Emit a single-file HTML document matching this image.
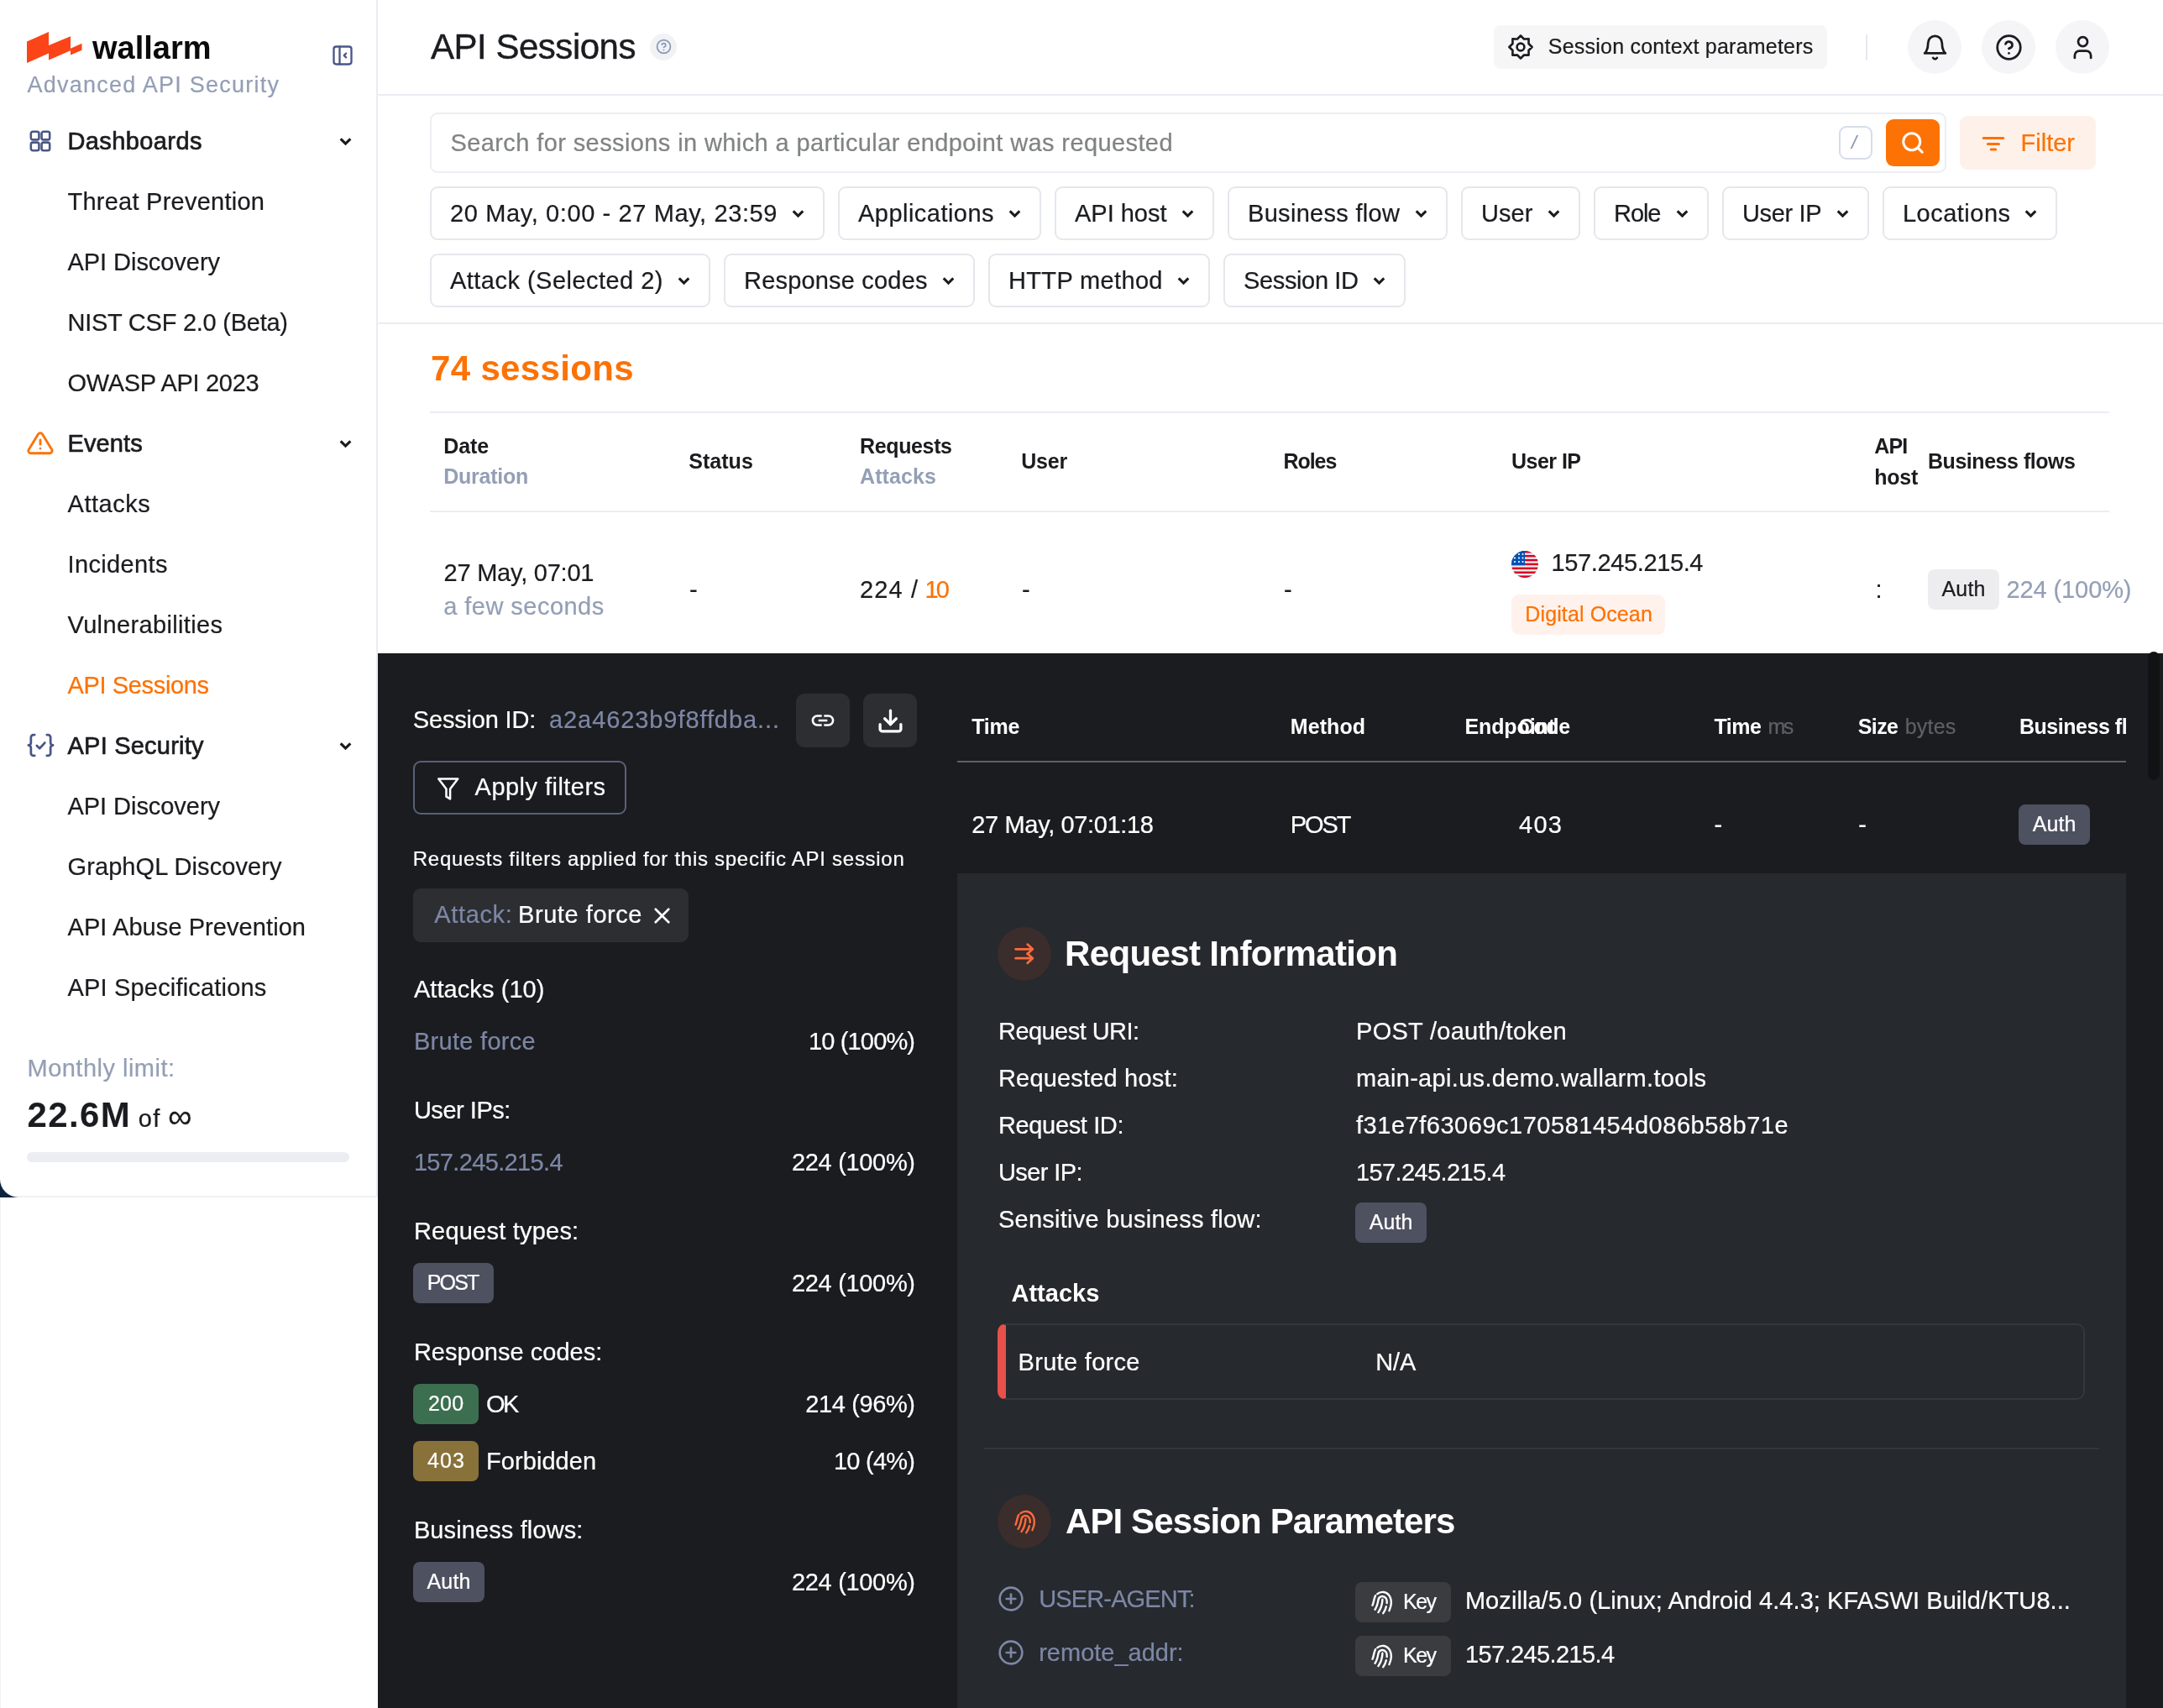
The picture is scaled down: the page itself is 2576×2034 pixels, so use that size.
<!DOCTYPE html>
<html lang="en">
<head>
<meta charset="utf-8">
<title>API Sessions - Wallarm</title>
<style>
html,body{margin:0;padding:0;}
body{width:2576px;height:2034px;position:relative;overflow:hidden;background:#fff;font-family:"Liberation Sans",sans-serif;color:#1b1c1f;}
.sec{position:absolute;left:0;top:0;width:2576px;height:0;will-change:transform;}
.b{position:absolute;box-sizing:border-box;}
.t{position:absolute;white-space:nowrap;margin:0;padding:0;font-weight:400;-webkit-text-stroke:0.22px currentColor;}
.t.bd{-webkit-text-stroke:0;}
.i{position:absolute;overflow:visible;}
</style>
</head>
<body>
<div class="sec" id="bg">
<div class="b" style="left:0px;top:0px;width:2576px;height:2034px;background:#fff;"></div>
<div class="b" style="left:0px;top:1398px;width:30px;height:28px;background:#0b2240;"></div>
</div>
<aside class="sec" id="sidebar">
<div class="b" style="left:0px;top:0px;width:450px;height:1426px;background:#fff;border-right:2px solid #ebecf3;border-bottom:2px solid #f0f1f5;border-bottom-left-radius:22px;"></div>
<div class="b" style="left:0px;top:1426px;width:1px;height:608px;background:#f1f2f5;"></div>
<svg class="i" style="left:32px;top:38px;" width="66" height="37" viewBox="0 0 66 37" fill="#fc4419" stroke="none" stroke-width="0" stroke-linecap="round" stroke-linejoin="round"><path d="M0 11.6 26 0v25.4L0 37z"/><path d="M26 15.9 52 5.300v17.0L26 33.6z"/><path d="M52 19.7 65.500 13.700v8.100L52 27.600z"/></svg>
<span class="t bd" style="top:36px;font-size:38px;line-height:42px;color:#0b0b0c;font-weight:700;letter-spacing:-0.003px;left:110px;">wallarm</span>
<span class="t" style="top:86px;font-size:27px;line-height:30px;color:#949fb5;letter-spacing:1.242px;left:32.5px;">Advanced API Security</span>
<svg class="i" style="left:394px;top:52px;" width="28" height="28" viewBox="0 0 24 24" fill="none" stroke="#4a5785" stroke-width="2" stroke-linecap="round" stroke-linejoin="round"><rect x="3" y="3" width="18" height="18" rx="2.500"/><path d="M9 3v18"/><path d="m15.500 14-2-2 2-2"/></svg>
<span class="t" style="top:152px;font-size:29px;line-height:32px;color:#1b1c1f;letter-spacing:0.392px;left:80.5px;-webkit-text-stroke:0.7px currentColor;">Dashboards</span>
<svg class="i" style="left:401.1px;top:158.1px;stroke-linecap:square;stroke-linejoin:miter;" width="21" height="21" viewBox="0 0 24 24" fill="none" stroke="#1b1c1f" stroke-width="3.6" stroke-linecap="round" stroke-linejoin="round"><path d="m6.600 9.600 5.400 5.400 5.400-5.400"/></svg>
<span class="t" style="top:224px;font-size:29px;line-height:32px;color:#1b1c1f;letter-spacing:0.242px;left:80.5px;">Threat Prevention</span>
<span class="t" style="top:296px;font-size:29px;line-height:32px;color:#1b1c1f;letter-spacing:-0.050px;left:80.5px;">API Discovery</span>
<span class="t" style="top:368px;font-size:29px;line-height:32px;color:#1b1c1f;letter-spacing:-0.250px;left:80.5px;">NIST CSF 2.0 (Beta)</span>
<span class="t" style="top:440px;font-size:29px;line-height:32px;color:#1b1c1f;letter-spacing:-0.311px;left:80.5px;">OWASP API 2023</span>
<span class="t" style="top:512px;font-size:29px;line-height:32px;color:#1b1c1f;letter-spacing:0.127px;left:80.5px;-webkit-text-stroke:0.7px currentColor;">Events</span>
<svg class="i" style="left:401.1px;top:518.1px;stroke-linecap:square;stroke-linejoin:miter;" width="21" height="21" viewBox="0 0 24 24" fill="none" stroke="#1b1c1f" stroke-width="3.6" stroke-linecap="round" stroke-linejoin="round"><path d="m6.600 9.600 5.400 5.400 5.400-5.400"/></svg>
<span class="t" style="top:584px;font-size:29px;line-height:32px;color:#1b1c1f;letter-spacing:0.534px;left:80.5px;">Attacks</span>
<span class="t" style="top:656px;font-size:29px;line-height:32px;color:#1b1c1f;letter-spacing:0.365px;left:80.5px;">Incidents</span>
<span class="t" style="top:728px;font-size:29px;line-height:32px;color:#1b1c1f;letter-spacing:0.359px;left:80.5px;">Vulnerabilities</span>
<span class="t" style="top:800px;font-size:29px;line-height:32px;color:#fd7204;letter-spacing:-0.362px;left:80.5px;">API Sessions</span>
<span class="t" style="top:872px;font-size:29px;line-height:32px;color:#1b1c1f;letter-spacing:0.221px;left:80.5px;-webkit-text-stroke:0.7px currentColor;">API Security</span>
<svg class="i" style="left:401.1px;top:878.1px;stroke-linecap:square;stroke-linejoin:miter;" width="21" height="21" viewBox="0 0 24 24" fill="none" stroke="#1b1c1f" stroke-width="3.6" stroke-linecap="round" stroke-linejoin="round"><path d="m6.600 9.600 5.400 5.400 5.400-5.400"/></svg>
<span class="t" style="top:944px;font-size:29px;line-height:32px;color:#1b1c1f;letter-spacing:-0.050px;left:80.5px;">API Discovery</span>
<span class="t" style="top:1016px;font-size:29px;line-height:32px;color:#1b1c1f;letter-spacing:0.095px;left:80.5px;">GraphQL Discovery</span>
<span class="t" style="top:1088px;font-size:29px;line-height:32px;color:#1b1c1f;letter-spacing:0.072px;left:80.5px;">API Abuse Prevention</span>
<span class="t" style="top:1160px;font-size:29px;line-height:32px;color:#1b1c1f;letter-spacing:0.180px;left:80.5px;">API Specifications</span>
<svg class="i" style="left:34px;top:154px;" width="28" height="28" viewBox="0 0 24.800 24.800" fill="none" stroke="#4a5785" stroke-width="2.3" stroke-linecap="round" stroke-linejoin="round"><rect x="2.500" y="2.500" width="8.500" height="8.500" rx="2"/><rect x="13.800" y="2.500" width="8.500" height="8.500" rx="2"/><rect x="2.500" y="13.800" width="8.500" height="8.500" rx="2"/><rect x="13.800" y="13.800" width="8.500" height="8.500" rx="2"/></svg>
<svg class="i" style="left:30.6px;top:509.6px;" width="34" height="34" viewBox="0 0 24 24" fill="none" stroke="#fd7204" stroke-width="2" stroke-linecap="round" stroke-linejoin="round"><path d="m21.730 18-8-13a2 2 0 0 0-3.480 0l-8 13A2 2 0 0 0 4 21h16a2 2 0 0 0 1.730-3Z"/><path d="M12 9.800v3.700"/><path d="M12 17h.01"/></svg>
<svg class="i" style="left:30.5px;top:870px;" width="35" height="35" viewBox="0 0 24 24" fill="none" stroke="#4a5785" stroke-width="1.9" stroke-linecap="round" stroke-linejoin="round"><path d="M7 3.500H6a2 2 0 0 0-2 2v4.500a2 2 0 0 1-2 2 2 2 0 0 1 2 2v4.500a2 2 0 0 0 2 2h1"/><path d="M17 3.500h1a2 2 0 0 1 2 2v4.500a2 2 0 0 0 2 2 2 2 0 0 0-2 2v4.500a2 2 0 0 1-2 2h-1"/><path d="m8.800 12.300 2.300 2.300 4.200-4.600"/></svg>
<span class="t" style="top:1256px;font-size:29px;line-height:32px;color:#949fb5;letter-spacing:0.484px;left:32.5px;">Monthly limit:</span>
<span class="t bd" style="top:1304px;font-size:42px;line-height:47px;color:#1b1c1f;font-weight:700;letter-spacing:1.364px;left:32.5px;">22.6M</span>
<span class="t" style="top:1316px;font-size:29px;line-height:32px;color:#1b1c1f;letter-spacing:1.313px;left:164.7px;">of</span>
<span class="t" style="top:1307px;font-size:40px;line-height:44px;color:#1b1c1f;letter-spacing:-0.516px;left:200px;font-family:"DejaVu Sans",sans-serif;">∞</span>
<div class="b" style="left:32px;top:1372px;width:384px;height:12px;background:#ecedf3;border-radius:6px;"></div>
</aside>
<header class="sec" id="header">
<span class="t" style="top:32px;font-size:42px;line-height:47px;color:#1b1c1f;letter-spacing:-0.482px;left:513px;-webkit-text-stroke:0.45px currentColor;">API Sessions</span>
<div class="b" style="left:774px;top:40px;width:32px;height:32px;background:#f1f2f6;border-radius:16px;"></div>
<svg class="i" style="left:780.5px;top:46px;" width="19" height="19" viewBox="0 0 24 24" fill="none" stroke="#8c97b3" stroke-width="2.2" stroke-linecap="round" stroke-linejoin="round"><circle cx="12" cy="12" r="10"/><path d="M9.090 9a3 3 0 0 1 5.830 1c0 2-3 3-3 3"/><path d="M12 17h.01"/></svg>
<div class="b" style="left:1779px;top:30px;width:397px;height:52px;background:#f6f6f7;border-radius:8px;"></div>
<svg class="i" style="left:1795px;top:40px;" width="32" height="32" viewBox="0 0 32 32" fill="none" stroke="#1b1c1f" stroke-width="2.6" stroke-linecap="round" stroke-linejoin="round"><polygon points="16.00,2.40 19.94,6.48 25.62,6.38 25.52,12.06 29.60,16.00 25.52,19.94 25.62,25.62 19.94,25.52 16.00,29.60 12.06,25.52 6.38,25.62 6.48,19.94 2.40,16.00 6.48,12.06 6.38,6.38 12.06,6.48"/><circle cx="16" cy="16" r="4.400"/></svg>
<span class="t" style="top:41px;font-size:25px;line-height:28px;color:#1b1c1f;letter-spacing:0.225px;left:1843.8px;">Session context parameters</span>
<div class="b" style="left:2222px;top:41px;width:2px;height:31px;background:#e6e8ef;"></div>
<div class="b" style="left:2272px;top:24px;width:64px;height:64px;background:#f5f5f7;border-radius:32px;"></div>
<div class="b" style="left:2360px;top:24px;width:64px;height:64px;background:#f5f5f7;border-radius:32px;"></div>
<div class="b" style="left:2448px;top:24px;width:64px;height:64px;background:#f5f5f7;border-radius:32px;"></div>
<svg class="i" style="left:2287.5px;top:39.5px;" width="33" height="33" viewBox="0 0 24 24" fill="none" stroke="#1b1c1f" stroke-width="2" stroke-linecap="round" stroke-linejoin="round"><path d="M6 8a6 6 0 0 1 12 0c0 7 3 9 3 9H3s3-2 3-9"/><path d="M10.300 21a1.940 1.940 0 0 0 3.400 0"/></svg>
<svg class="i" style="left:2375.5px;top:39.5px;" width="33" height="33" viewBox="0 0 24 24" fill="none" stroke="#1b1c1f" stroke-width="2" stroke-linecap="round" stroke-linejoin="round"><circle cx="12" cy="12" r="10"/><path d="M9.090 9a3 3 0 0 1 5.830 1c0 2-3 3-3 3"/><path d="M12 17h.01"/></svg>
<svg class="i" style="left:2463.5px;top:39.5px;" width="33" height="33" viewBox="0 0 24 24" fill="none" stroke="#1b1c1f" stroke-width="2" stroke-linecap="round" stroke-linejoin="round"><path d="M19 21v-2a4 4 0 0 0-4-4H9a4 4 0 0 0-4 4v2"/><circle cx="12" cy="7" r="4"/></svg>
<div class="b" style="left:450px;top:112px;width:2126px;height:2px;background:#ebecf3;"></div>
</header>
<section class="sec" id="filters">
<div class="b" style="left:512px;top:134px;width:1806px;height:72px;background:#fff;border-radius:9px;border:2px solid #eceef4;"></div>
<span class="t" style="top:154px;font-size:29px;line-height:32px;color:#808384;letter-spacing:0.397px;left:536.5px;">Search for sessions in which a particular endpoint was requested</span>
<div class="b" style="left:2190px;top:150px;width:40px;height:40px;background:#fff;border-radius:9px;border:2px solid #d6dcea;"></div>
<span class="t" style="top:157px;font-size:22px;line-height:25px;color:#8c97b3;left:2205px;font-style:italic;">/</span>
<div class="b" style="left:2246px;top:142px;width:64px;height:56px;background:#fd7204;border-radius:9px;"></div>
<svg class="i" style="left:2263px;top:155px;" width="30" height="30" viewBox="0 0 24 24" fill="none" stroke="#fff" stroke-width="2.4" stroke-linecap="round" stroke-linejoin="round"><circle cx="11" cy="11" r="8"/><path d="m21 21-4.300-4.300"/></svg>
<div class="b" style="left:2334px;top:138px;width:162px;height:64px;background:#fef1ea;border-radius:9px;"></div>
<svg class="i" style="left:2360px;top:157px;" width="28" height="28" viewBox="0 0 28 28" fill="none" stroke="#fd7204" stroke-width="3" stroke-linecap="round" stroke-linejoin="round"><path d="M2.200 7.600h23.500"/><path d="M7.400 14.400h13.100"/><path d="M11.200 21h5.500"/></svg>
<span class="t" style="top:154px;font-size:29px;line-height:32px;color:#fd7204;letter-spacing:0.011px;left:2406.5px;">Filter</span>
<div class="b" style="left:512px;top:222px;width:470px;height:64px;background:#fff;border-radius:9px;border:2px solid #e5e7ec;"></div>
<span class="t" style="top:238px;font-size:29px;line-height:32px;color:#1b1c1f;letter-spacing:0.614px;left:536px;">20 May, 0:00 - 27 May, 23:59</span>
<svg class="i" style="left:939.5px;top:243.5px;stroke-linecap:square;stroke-linejoin:miter;" width="21" height="21" viewBox="0 0 24 24" fill="none" stroke="#1b1c1f" stroke-width="3.4" stroke-linecap="round" stroke-linejoin="round"><path d="m6.600 9.600 5.400 5.400 5.400-5.400"/></svg>
<div class="b" style="left:998px;top:222px;width:242px;height:64px;background:#fff;border-radius:9px;border:2px solid #e5e7ec;"></div>
<span class="t" style="top:238px;font-size:29px;line-height:32px;color:#1b1c1f;letter-spacing:0.466px;left:1022px;">Applications</span>
<svg class="i" style="left:1197.5px;top:243.5px;stroke-linecap:square;stroke-linejoin:miter;" width="21" height="21" viewBox="0 0 24 24" fill="none" stroke="#1b1c1f" stroke-width="3.4" stroke-linecap="round" stroke-linejoin="round"><path d="m6.600 9.600 5.400 5.400 5.400-5.400"/></svg>
<div class="b" style="left:1256px;top:222px;width:190px;height:64px;background:#fff;border-radius:9px;border:2px solid #e5e7ec;"></div>
<span class="t" style="top:238px;font-size:29px;line-height:32px;color:#1b1c1f;letter-spacing:-0.017px;left:1280px;">API host</span>
<svg class="i" style="left:1403.5px;top:243.5px;stroke-linecap:square;stroke-linejoin:miter;" width="21" height="21" viewBox="0 0 24 24" fill="none" stroke="#1b1c1f" stroke-width="3.4" stroke-linecap="round" stroke-linejoin="round"><path d="m6.600 9.600 5.400 5.400 5.400-5.400"/></svg>
<div class="b" style="left:1462px;top:222px;width:262px;height:64px;background:#fff;border-radius:9px;border:2px solid #e5e7ec;"></div>
<span class="t" style="top:238px;font-size:29px;line-height:32px;color:#1b1c1f;letter-spacing:0.308px;left:1486px;">Business flow</span>
<svg class="i" style="left:1681.5px;top:243.5px;stroke-linecap:square;stroke-linejoin:miter;" width="21" height="21" viewBox="0 0 24 24" fill="none" stroke="#1b1c1f" stroke-width="3.4" stroke-linecap="round" stroke-linejoin="round"><path d="m6.600 9.600 5.400 5.400 5.400-5.400"/></svg>
<div class="b" style="left:1740px;top:222px;width:142px;height:64px;background:#fff;border-radius:9px;border:2px solid #e5e7ec;"></div>
<span class="t" style="top:238px;font-size:29px;line-height:32px;color:#1b1c1f;letter-spacing:0.089px;left:1764px;">User</span>
<svg class="i" style="left:1839.5px;top:243.5px;stroke-linecap:square;stroke-linejoin:miter;" width="21" height="21" viewBox="0 0 24 24" fill="none" stroke="#1b1c1f" stroke-width="3.4" stroke-linecap="round" stroke-linejoin="round"><path d="m6.600 9.600 5.400 5.400 5.400-5.400"/></svg>
<div class="b" style="left:1898px;top:222px;width:137px;height:64px;background:#fff;border-radius:9px;border:2px solid #e5e7ec;"></div>
<span class="t" style="top:238px;font-size:29px;line-height:32px;color:#1b1c1f;letter-spacing:-1.048px;left:1922px;">Role</span>
<svg class="i" style="left:1992.5px;top:243.5px;stroke-linecap:square;stroke-linejoin:miter;" width="21" height="21" viewBox="0 0 24 24" fill="none" stroke="#1b1c1f" stroke-width="3.4" stroke-linecap="round" stroke-linejoin="round"><path d="m6.600 9.600 5.400 5.400 5.400-5.400"/></svg>
<div class="b" style="left:2051px;top:222px;width:175px;height:64px;background:#fff;border-radius:9px;border:2px solid #e5e7ec;"></div>
<span class="t" style="top:238px;font-size:29px;line-height:32px;color:#1b1c1f;letter-spacing:-0.365px;left:2075px;">User IP</span>
<svg class="i" style="left:2183.5px;top:243.5px;stroke-linecap:square;stroke-linejoin:miter;" width="21" height="21" viewBox="0 0 24 24" fill="none" stroke="#1b1c1f" stroke-width="3.4" stroke-linecap="round" stroke-linejoin="round"><path d="m6.600 9.600 5.400 5.400 5.400-5.400"/></svg>
<div class="b" style="left:2242px;top:222px;width:208px;height:64px;background:#fff;border-radius:9px;border:2px solid #e5e7ec;"></div>
<span class="t" style="top:238px;font-size:29px;line-height:32px;color:#1b1c1f;letter-spacing:0.481px;left:2266px;">Locations</span>
<svg class="i" style="left:2407.5px;top:243.5px;stroke-linecap:square;stroke-linejoin:miter;" width="21" height="21" viewBox="0 0 24 24" fill="none" stroke="#1b1c1f" stroke-width="3.4" stroke-linecap="round" stroke-linejoin="round"><path d="m6.600 9.600 5.400 5.400 5.400-5.400"/></svg>
<div class="b" style="left:512px;top:302px;width:334px;height:64px;background:#fff;border-radius:9px;border:2px solid #e5e7ec;"></div>
<span class="t" style="top:318px;font-size:29px;line-height:32px;color:#1b1c1f;letter-spacing:0.472px;left:536px;">Attack (Selected 2)</span>
<svg class="i" style="left:803.5px;top:323.5px;stroke-linecap:square;stroke-linejoin:miter;" width="21" height="21" viewBox="0 0 24 24" fill="none" stroke="#1b1c1f" stroke-width="3.4" stroke-linecap="round" stroke-linejoin="round"><path d="m6.600 9.600 5.400 5.400 5.400-5.400"/></svg>
<div class="b" style="left:862px;top:302px;width:299px;height:64px;background:#fff;border-radius:9px;border:2px solid #e5e7ec;"></div>
<span class="t" style="top:318px;font-size:29px;line-height:32px;color:#1b1c1f;letter-spacing:0.189px;left:886px;">Response codes</span>
<svg class="i" style="left:1118.5px;top:323.5px;stroke-linecap:square;stroke-linejoin:miter;" width="21" height="21" viewBox="0 0 24 24" fill="none" stroke="#1b1c1f" stroke-width="3.4" stroke-linecap="round" stroke-linejoin="round"><path d="m6.600 9.600 5.400 5.400 5.400-5.400"/></svg>
<div class="b" style="left:1177px;top:302px;width:264px;height:64px;background:#fff;border-radius:9px;border:2px solid #e5e7ec;"></div>
<span class="t" style="top:318px;font-size:29px;line-height:32px;color:#1b1c1f;letter-spacing:0.352px;left:1201px;">HTTP method</span>
<svg class="i" style="left:1398.5px;top:323.5px;stroke-linecap:square;stroke-linejoin:miter;" width="21" height="21" viewBox="0 0 24 24" fill="none" stroke="#1b1c1f" stroke-width="3.4" stroke-linecap="round" stroke-linejoin="round"><path d="m6.600 9.600 5.400 5.400 5.400-5.400"/></svg>
<div class="b" style="left:1457px;top:302px;width:217px;height:64px;background:#fff;border-radius:9px;border:2px solid #e5e7ec;"></div>
<span class="t" style="top:318px;font-size:29px;line-height:32px;color:#1b1c1f;letter-spacing:-0.359px;left:1481px;">Session ID</span>
<svg class="i" style="left:1631.5px;top:323.5px;stroke-linecap:square;stroke-linejoin:miter;" width="21" height="21" viewBox="0 0 24 24" fill="none" stroke="#1b1c1f" stroke-width="3.4" stroke-linecap="round" stroke-linejoin="round"><path d="m6.600 9.600 5.400 5.400 5.400-5.400"/></svg>
<div class="b" style="left:450px;top:384px;width:2126px;height:2px;background:#ebecf3;"></div>
</section>
<main class="sec" id="sessions">
<span class="t bd" style="top:415px;font-size:42px;line-height:47px;color:#fd7204;font-weight:700;letter-spacing:0.333px;left:513px;">74 sessions</span>
<div class="b" style="left:512px;top:490px;width:2000px;height:2px;background:#ebecf3;"></div>
<div class="b" style="left:512px;top:608px;width:2000px;height:2px;background:#ebecf3;"></div>
<span class="t bd" style="top:517px;font-size:25px;line-height:28px;color:#1b1c1f;font-weight:700;letter-spacing:-0.063px;left:528.2px;">Date</span>
<span class="t bd" style="top:553px;font-size:25px;line-height:28px;color:#949fb5;font-weight:700;letter-spacing:-0.253px;left:528.2px;">Duration</span>
<span class="t bd" style="top:535px;font-size:25px;line-height:28px;color:#1b1c1f;font-weight:700;letter-spacing:0.017px;left:820.3px;">Status</span>
<span class="t bd" style="top:517px;font-size:25px;line-height:28px;color:#1b1c1f;font-weight:700;letter-spacing:-0.362px;left:1024px;">Requests</span>
<span class="t bd" style="top:553px;font-size:25px;line-height:28px;color:#949fb5;font-weight:700;letter-spacing:0.112px;left:1024px;">Attacks</span>
<span class="t bd" style="top:535px;font-size:25px;line-height:28px;color:#1b1c1f;font-weight:700;letter-spacing:-0.202px;left:1216.2px;">User</span>
<span class="t bd" style="top:535px;font-size:25px;line-height:28px;color:#1b1c1f;font-weight:700;letter-spacing:-1.022px;left:1528.4px;">Roles</span>
<span class="t bd" style="top:535px;font-size:25px;line-height:28px;color:#1b1c1f;font-weight:700;letter-spacing:-0.529px;left:1800px;">User IP</span>
<span class="t bd" style="top:517px;font-size:25px;line-height:28px;color:#1b1c1f;font-weight:700;letter-spacing:-0.844px;left:2232.3px;">API</span>
<span class="t bd" style="top:554px;font-size:25px;line-height:28px;color:#1b1c1f;font-weight:700;letter-spacing:-0.261px;left:2232.3px;">host</span>
<span class="t bd" style="top:535px;font-size:25px;line-height:28px;color:#1b1c1f;font-weight:700;letter-spacing:-0.462px;left:2296px;">Business flows</span>
<span class="t" style="top:666px;font-size:29px;line-height:32px;color:#1b1c1f;letter-spacing:-0.220px;left:528.5px;">27 May, 07:01</span>
<span class="t" style="top:706px;font-size:29px;line-height:32px;color:#949fb5;letter-spacing:0.467px;left:528.2px;">a few seconds</span>
<span class="t" style="top:686px;font-size:29px;line-height:32px;color:#1b1c1f;left:821px;">-</span>
<span class="t" style="top:686px;font-size:29px;line-height:32px;color:#1b1c1f;letter-spacing:1.125px;left:1024px;">224 /</span>
<span class="t" style="top:686px;font-size:29px;line-height:32px;color:#fd7204;letter-spacing:-2.766px;left:1101.5px;">10</span>
<span class="t" style="top:686px;font-size:29px;line-height:32px;color:#1b1c1f;left:1217px;">-</span>
<span class="t" style="top:686px;font-size:29px;line-height:32px;color:#1b1c1f;left:1529px;">-</span>
<svg class="i" style="left:1800px;top:656px" width="32" height="32" viewBox="0 0 32 32"><defs><clipPath id="fc"><circle cx="16" cy="16" r="16"/></clipPath></defs><g clip-path="url(#fc)"><rect width="32" height="32" fill="#eeeeee"/><g fill="#d80027"><rect y="0" width="32" height="2.500"/><rect y="4.900" width="32" height="2.500"/><rect y="9.800" width="32" height="2.500"/><rect y="14.700" width="32" height="2.500"/><rect y="19.600" width="32" height="2.500"/><rect y="24.500" width="32" height="2.500"/><rect y="29.400" width="32" height="2.600"/></g><rect width="16" height="17.200" fill="#0052b4"/><g fill="#fff"><circle cx="4" cy="4" r="1.100"/><circle cx="9" cy="4" r="1.100"/><circle cx="13.500" cy="4" r="1.100"/><circle cx="4" cy="8.500" r="1.100"/><circle cx="9" cy="8.500" r="1.100"/><circle cx="13.500" cy="8.500" r="1.100"/><circle cx="4" cy="13" r="1.100"/><circle cx="9" cy="13" r="1.100"/><circle cx="13.500" cy="13" r="1.100"/></g></g></svg>
<span class="t" style="top:654px;font-size:29px;line-height:32px;color:#1b1c1f;letter-spacing:-0.372px;left:1847.5px;">157.245.215.4</span>
<div class="b" style="left:1800px;top:708px;width:183px;height:48px;background:#fff2ec;border-radius:9px;"></div>
<span class="t" style="top:717px;font-size:25px;line-height:28px;color:#fd7204;letter-spacing:0.118px;left:1816.3px;">Digital Ocean</span>
<span class="t" style="top:686px;font-size:29px;line-height:32px;color:#1b1c1f;left:2233.5px;">:</span>
<div class="b" style="left:2296px;top:678px;width:85px;height:48px;background:#ededef;border-radius:8px;"></div>
<span class="t" style="top:687px;font-size:25px;line-height:28px;color:#1b1c1f;letter-spacing:0.187px;left:2312.5px;">Auth</span>
<span class="t" style="top:686px;font-size:29px;line-height:32px;color:#949fb5;letter-spacing:-0.104px;left:2389.5px;">224 (100%)</span>
</main>
<section class="sec" id="panel">
<div class="b" style="left:450px;top:778px;width:2126px;height:1256px;background:#1b1c1f;"></div>
<div class="b" style="left:2558px;top:776px;width:14px;height:153px;background:#111213;border-radius:7px;"></div>
<span class="t" style="top:841px;font-size:29px;line-height:32px;color:#fff;letter-spacing:-0.180px;left:491.8px;">Session ID:</span>
<span class="t" style="top:841px;font-size:29px;line-height:32px;color:#7d87a5;letter-spacing:0.917px;left:654px;">a2a4623b9f8ffdba...</span>
<div class="b" style="left:948px;top:826px;width:64px;height:64px;background:#2d2e32;border-radius:10px;"></div>
<svg class="i" style="left:964px;top:842px;" width="32" height="32" viewBox="0 0 24 24" fill="#fff" stroke="none" stroke-width="0" stroke-linecap="round" stroke-linejoin="round"><path d="M3.900 12c0-1.710 1.390-3.100 3.100-3.100h4V7H7c-2.760 0-5 2.240-5 5s2.240 5 5 5h4v-1.900H7c-1.710 0-3.100-1.390-3.100-3.100zM8 13h8v-2H8v2zm9-6h-4v1.900h4c1.710 0 3.100 1.390 3.100 3.100s-1.390 3.100-3.100 3.100h-4V17h4c2.760 0 5-2.240 5-5s-2.240-5-5-5z"/></svg>
<div class="b" style="left:1028px;top:826px;width:64px;height:64px;background:#2d2e32;border-radius:10px;"></div>
<svg class="i" style="left:1043.5px;top:841.5px;" width="33" height="33" viewBox="0 0 24 24" fill="none" stroke="#fff" stroke-width="2.4" stroke-linecap="round" stroke-linejoin="round"><path d="M21 15v4a2 2 0 0 1-2 2H5a2 2 0 0 1-2-2v-4"/><polyline points="7 10 12 15 17 10"/><line x1="12" x2="12" y1="15" y2="3"/></svg>
<div class="b" style="left:492px;top:906px;width:254px;height:64px;border-radius:9px;border:2px solid #596078;"></div>
<svg class="i" style="left:519.5px;top:923.5px;" width="27.6" height="31" viewBox="0 0 24 27" fill="none" stroke="#fff" stroke-width="2.2" stroke-linecap="round" stroke-linejoin="round"><polygon points="22 3 2 3 10 13.500 10 21.500 14 23.900 14 13.500"/></svg>
<span class="t" style="top:921px;font-size:29px;line-height:32px;color:#fff;letter-spacing:0.467px;left:565.6px;">Apply filters</span>
<span class="t" style="top:1009px;font-size:24px;line-height:27px;color:#fff;letter-spacing:0.718px;left:491.8px;">Requests filters applied for this specific API session</span>
<div class="b" style="left:492px;top:1058px;width:328px;height:64px;background:#2d2e32;border-radius:9px;"></div>
<span class="t" style="top:1073px;font-size:29px;line-height:32px;color:#7d87a5;letter-spacing:0.641px;left:517.3px;">Attack:</span>
<span class="t" style="top:1073px;font-size:29px;line-height:32px;color:#fff;letter-spacing:0.565px;left:617px;">Brute force</span>
<svg class="i" style="left:772.5px;top:1074.5px;" width="31" height="31" viewBox="0 0 24 24" fill="none" stroke="#fff" stroke-width="2.1" stroke-linecap="round" stroke-linejoin="round"><path d="M18 6 6 18"/><path d="m6 6 12 12"/></svg>
<span class="t" style="top:1162px;font-size:29px;line-height:32px;color:#fff;letter-spacing:0.079px;left:492.9px;">Attacks (10)</span>
<span class="t" style="top:1224px;font-size:29px;line-height:32px;color:#7d87a5;letter-spacing:0.295px;left:492.9px;">Brute force</span>
<span class="t" style="top:1224px;font-size:29px;line-height:32px;color:#fff;letter-spacing:-0.850px;right:1486.85px;">10 (100%)</span>
<span class="t" style="top:1306px;font-size:29px;line-height:32px;color:#fff;letter-spacing:-0.468px;left:492.9px;">User IPs:</span>
<span class="t" style="top:1368px;font-size:29px;line-height:32px;color:#7d87a5;letter-spacing:-0.646px;left:492.9px;">157.245.215.4</span>
<span class="t" style="top:1368px;font-size:29px;line-height:32px;color:#fff;letter-spacing:-0.326px;right:1486.33px;">224 (100%)</span>
<span class="t" style="top:1450px;font-size:29px;line-height:32px;color:#fff;letter-spacing:0.219px;left:492.9px;">Request types:</span>
<div class="b" style="left:492px;top:1504px;width:96px;height:48px;background:#4e5160;border-radius:8px;"></div>
<span class="t" style="top:1513px;font-size:25px;line-height:28px;color:#fff;letter-spacing:-1.859px;left:508.75px;">POST</span>
<span class="t" style="top:1512px;font-size:29px;line-height:32px;color:#fff;letter-spacing:-0.326px;right:1486.33px;">224 (100%)</span>
<span class="t" style="top:1594px;font-size:29px;line-height:32px;color:#fff;letter-spacing:0.022px;left:492.9px;">Response codes:</span>
<div class="b" style="left:492px;top:1648px;width:78px;height:48px;background:#3c6e50;border-radius:8px;"></div>
<span class="t" style="top:1657px;font-size:25px;line-height:28px;color:#fff;letter-spacing:0.238px;left:509.9px;">200</span>
<span class="t" style="top:1656px;font-size:29px;line-height:32px;color:#fff;letter-spacing:-2.406px;left:578.9px;">OK</span>
<span class="t" style="top:1656px;font-size:29px;line-height:32px;color:#fff;letter-spacing:-0.388px;right:1486.39px;">214 (96%)</span>
<div class="b" style="left:492px;top:1716px;width:78px;height:48px;background:#89723a;border-radius:8px;"></div>
<span class="t" style="top:1725px;font-size:25px;line-height:28px;color:#fff;letter-spacing:1.043px;left:509.1px;">403</span>
<span class="t" style="top:1724px;font-size:29px;line-height:32px;color:#fff;letter-spacing:0.089px;left:578.9px;">Forbidden</span>
<span class="t" style="top:1724px;font-size:29px;line-height:32px;color:#fff;letter-spacing:-0.758px;right:1486.76px;">10 (4%)</span>
<span class="t" style="top:1806px;font-size:29px;line-height:32px;color:#fff;letter-spacing:0.116px;left:492.9px;">Business flows:</span>
<div class="b" style="left:492px;top:1860px;width:85px;height:48px;background:#4e5160;border-radius:8px;"></div>
<span class="t" style="top:1869px;font-size:25px;line-height:28px;color:#fff;letter-spacing:0.221px;left:508.45px;">Auth</span>
<span class="t" style="top:1868px;font-size:29px;line-height:32px;color:#fff;letter-spacing:-0.326px;right:1486.33px;">224 (100%)</span>
<div class="b" style="left:1140px;top:906px;width:1392px;height:2px;background:#5f6166;"></div>
<span class="t bd" style="top:851px;font-size:25px;line-height:28px;color:#fff;font-weight:700;letter-spacing:-0.304px;left:1157.3px;">Time</span>
<span class="t bd" style="top:851px;font-size:25px;line-height:28px;color:#fff;font-weight:700;letter-spacing:0.064px;left:1536.8px;">Method</span>
<span class="t bd" style="top:851px;font-size:25px;line-height:28px;color:#fff;font-weight:700;letter-spacing:-0.116px;left:1744.5px;">Endpoint</span>
<span class="t bd" style="top:851px;font-size:25px;line-height:28px;color:#fff;font-weight:700;letter-spacing:-0.335px;left:1808.6px;">Code</span>
<span class="t bd" style="top:851px;font-size:25px;line-height:28px;color:#fff;font-weight:700;letter-spacing:-0.435px;left:2041.4px;">Time</span>
<span class="t" style="top:851px;font-size:25px;line-height:28px;color:#5d6067;letter-spacing:-2.627px;left:2105.6px;">ms</span>
<span class="t bd" style="top:851px;font-size:25px;line-height:28px;color:#fff;font-weight:700;letter-spacing:-0.613px;left:2212.8px;">Size</span>
<span class="t" style="top:851px;font-size:25px;line-height:28px;color:#5d6067;letter-spacing:0.211px;left:2268.7px;">bytes</span>
<div class="b" style="left:2404.900px;top:850px;width:126.800px;height:40px;overflow:hidden">
<span class="t bd" style="top:1px;font-size:25px;line-height:28px;color:#fff;font-weight:700;letter-spacing:-0.461px;left:0px;">Business flows</span>
</div>
<span class="t" style="top:966px;font-size:29px;line-height:32px;color:#fff;letter-spacing:-0.351px;left:1157.3px;">27 May, 07:01:18</span>
<span class="t" style="top:966px;font-size:29px;line-height:32px;color:#fff;letter-spacing:-2.120px;left:1536.8px;">POST</span>
<span class="t" style="top:966px;font-size:29px;line-height:32px;color:#fff;letter-spacing:1.306px;left:1809px;">403</span>
<span class="t" style="top:966px;font-size:29px;line-height:32px;color:#fff;left:2041.5px;">-</span>
<span class="t" style="top:966px;font-size:29px;line-height:32px;color:#fff;left:2213.3px;">-</span>
<div class="b" style="left:2404px;top:958px;width:85px;height:48px;background:#4e5160;border-radius:8px;"></div>
<span class="t" style="top:967px;font-size:25px;line-height:28px;color:#fff;letter-spacing:0.056px;left:2420.7px;">Auth</span>
<div class="b" style="left:1140px;top:1040px;width:1392px;height:994px;background:#26292d;"></div>
<div class="b" style="left:1188px;top:1104px;width:64px;height:64px;background:#3a2d2b;border-radius:32px;"></div>
<svg class="i" style="left:1206px;top:1122px;" width="28" height="28" viewBox="0 0 24 27" fill="none" stroke="#ff6b3d" stroke-width="2.6" stroke-linecap="round" stroke-linejoin="round"><path d="M2 8h19"/><path d="m15.500 2.500 6 5.500-6 5.500"/><path d="M2 18.500h19"/><path d="m15.500 13 6 5.500-6 5.500"/></svg>
<span class="t bd" style="top:1112px;font-size:42px;line-height:47px;color:#fff;font-weight:700;letter-spacing:-0.631px;left:1268px;">Request Information</span>
<span class="t" style="top:1212px;font-size:29px;line-height:32px;color:#fff;letter-spacing:-0.552px;left:1189px;">Request URI:</span>
<span class="t" style="top:1212px;font-size:29px;line-height:32px;color:#fff;letter-spacing:0.286px;left:1615px;">POST /oauth/token</span>
<span class="t" style="top:1268px;font-size:29px;line-height:32px;color:#fff;letter-spacing:0.178px;left:1189px;">Requested host:</span>
<span class="t" style="top:1268px;font-size:29px;line-height:32px;color:#fff;letter-spacing:0.318px;left:1615px;">main-api.us.demo.wallarm.tools</span>
<span class="t" style="top:1324px;font-size:29px;line-height:32px;color:#fff;letter-spacing:-0.363px;left:1189px;">Request ID:</span>
<span class="t" style="top:1324px;font-size:29px;line-height:32px;color:#fff;letter-spacing:0.524px;left:1615px;">f31e7f63069c170581454d086b58b71e</span>
<span class="t" style="top:1380px;font-size:29px;line-height:32px;color:#fff;letter-spacing:-0.607px;left:1189px;">User IP:</span>
<span class="t" style="top:1380px;font-size:29px;line-height:32px;color:#fff;letter-spacing:-0.605px;left:1615px;">157.245.215.4</span>
<span class="t" style="top:1436px;font-size:29px;line-height:32px;color:#fff;letter-spacing:0.249px;left:1189px;">Sensitive business flow:</span>
<div class="b" style="left:1614px;top:1432px;width:85px;height:48px;background:#4e5160;border-radius:8px;"></div>
<span class="t" style="top:1441px;font-size:25px;line-height:28px;color:#fff;letter-spacing:0.056px;left:1630.7px;">Auth</span>
<span class="t bd" style="top:1524px;font-size:29px;line-height:32px;color:#fff;font-weight:700;letter-spacing:0.003px;left:1204.5px;">Attacks</span>
<div class="b" style="left:1188px;top:1576px;width:1295px;height:91px;background:#26292d;border-radius:10px;border:2px solid #34373c;border-left:10px solid #e8504a;"></div>
<span class="t" style="top:1606px;font-size:29px;line-height:32px;color:#fff;letter-spacing:0.315px;left:1212.5px;">Brute force</span>
<span class="t" style="top:1606px;font-size:29px;line-height:32px;color:#fff;letter-spacing:-0.172px;left:1638.3px;">N/A</span>
<div class="b" style="left:1172px;top:1724px;width:1328px;height:2px;background:#32363b;"></div>
<div class="b" style="left:1188px;top:1780px;width:64px;height:64px;background:#3a2d2b;border-radius:32px;"></div>
<svg class="i" style="left:1207.6px;top:1797.6px;" width="26" height="29" viewBox="0 0 26 29" fill="none" stroke="#ff6b3d" stroke-width="2.4" stroke-linecap="round" stroke-linejoin="round"><path d="M7.33,4.16 C11.77,0.55 18.70,1.11 22.03,6.93 C25.63,13.31 23.69,19.14 21.47,24.13"/><path d="M5.11,6.10 C3.17,9.43 3.44,13.59 1.50,17.75"/><path d="M4.55,22.75 C7.33,18.58 7.88,14.98 8.44,11.37 C8.99,6.93 14.54,5.27 17.59,9.15 C18.98,11.09 18.70,13.31 18.70,14.98"/><path d="M8.44,26.07 C11.77,21.36 13.15,16.37 13.43,10.82"/><path d="M14.26,27.18 C16.20,24.13 17.31,21.64 17.87,19.14"/></svg>
<span class="t bd" style="top:1788px;font-size:42px;line-height:47px;color:#fff;font-weight:700;letter-spacing:-0.898px;left:1269px;">API Session Parameters</span>
<svg class="i" style="left:1188px;top:1888px;" width="32" height="32" viewBox="0 0 24 24" fill="none" stroke="#7d87a5" stroke-width="2.0" stroke-linecap="round" stroke-linejoin="round"><circle cx="12" cy="12" r="10"/><path d="M8 12h8"/><path d="M12 8v8"/></svg>
<span class="t" style="top:1888px;font-size:29px;line-height:32px;color:#7d87a5;letter-spacing:-0.858px;left:1237.2px;">USER-AGENT:</span>
<div class="b" style="left:1614px;top:1884px;width:114px;height:48px;background:#3a3c40;border-radius:8px;"></div>
<svg class="i" style="left:1633.2px;top:1893.6px;" width="26" height="29" viewBox="0 0 26 29" fill="none" stroke="#fff" stroke-width="2.4" stroke-linecap="round" stroke-linejoin="round"><path d="M7.33,4.16 C11.77,0.55 18.70,1.11 22.03,6.93 C25.63,13.31 23.69,19.14 21.47,24.13"/><path d="M5.11,6.10 C3.17,9.43 3.44,13.59 1.50,17.75"/><path d="M4.55,22.75 C7.33,18.58 7.88,14.98 8.44,11.37 C8.99,6.93 14.54,5.27 17.59,9.15 C18.98,11.09 18.70,13.31 18.70,14.98"/><path d="M8.44,26.07 C11.77,21.36 13.15,16.37 13.43,10.82"/><path d="M14.26,27.18 C16.20,24.13 17.31,21.64 17.87,19.14"/></svg>
<span class="t" style="top:1893px;font-size:25px;line-height:28px;color:#fff;letter-spacing:-1.547px;left:1671px;">Key</span>
<span class="t" style="top:1890px;font-size:29px;line-height:32px;color:#fff;letter-spacing:0.069px;left:1744.9px;">Mozilla/5.0 (Linux; Android 4.4.3; KFASWI Build/KTU8...</span>
<svg class="i" style="left:1188px;top:1952px;" width="32" height="32" viewBox="0 0 24 24" fill="none" stroke="#7d87a5" stroke-width="2.0" stroke-linecap="round" stroke-linejoin="round"><circle cx="12" cy="12" r="10"/><path d="M8 12h8"/><path d="M12 8v8"/></svg>
<span class="t" style="top:1952px;font-size:29px;line-height:32px;color:#7d87a5;letter-spacing:0.000px;left:1237.2px;">remote_addr:</span>
<div class="b" style="left:1614px;top:1948px;width:114px;height:48px;background:#3a3c40;border-radius:8px;"></div>
<svg class="i" style="left:1633.2px;top:1957.6px;" width="26" height="29" viewBox="0 0 26 29" fill="none" stroke="#fff" stroke-width="2.4" stroke-linecap="round" stroke-linejoin="round"><path d="M7.33,4.16 C11.77,0.55 18.70,1.11 22.03,6.93 C25.63,13.31 23.69,19.14 21.47,24.13"/><path d="M5.11,6.10 C3.17,9.43 3.44,13.59 1.50,17.75"/><path d="M4.55,22.75 C7.33,18.58 7.88,14.98 8.44,11.37 C8.99,6.93 14.54,5.27 17.59,9.15 C18.98,11.09 18.70,13.31 18.70,14.98"/><path d="M8.44,26.07 C11.77,21.36 13.15,16.37 13.43,10.82"/><path d="M14.26,27.18 C16.20,24.13 17.31,21.64 17.87,19.14"/></svg>
<span class="t" style="top:1957px;font-size:25px;line-height:28px;color:#fff;letter-spacing:-1.547px;left:1671px;">Key</span>
<span class="t" style="top:1954px;font-size:29px;line-height:32px;color:#fff;letter-spacing:-0.605px;left:1744.9px;">157.245.215.4</span>
</section>
</body>
</html>
